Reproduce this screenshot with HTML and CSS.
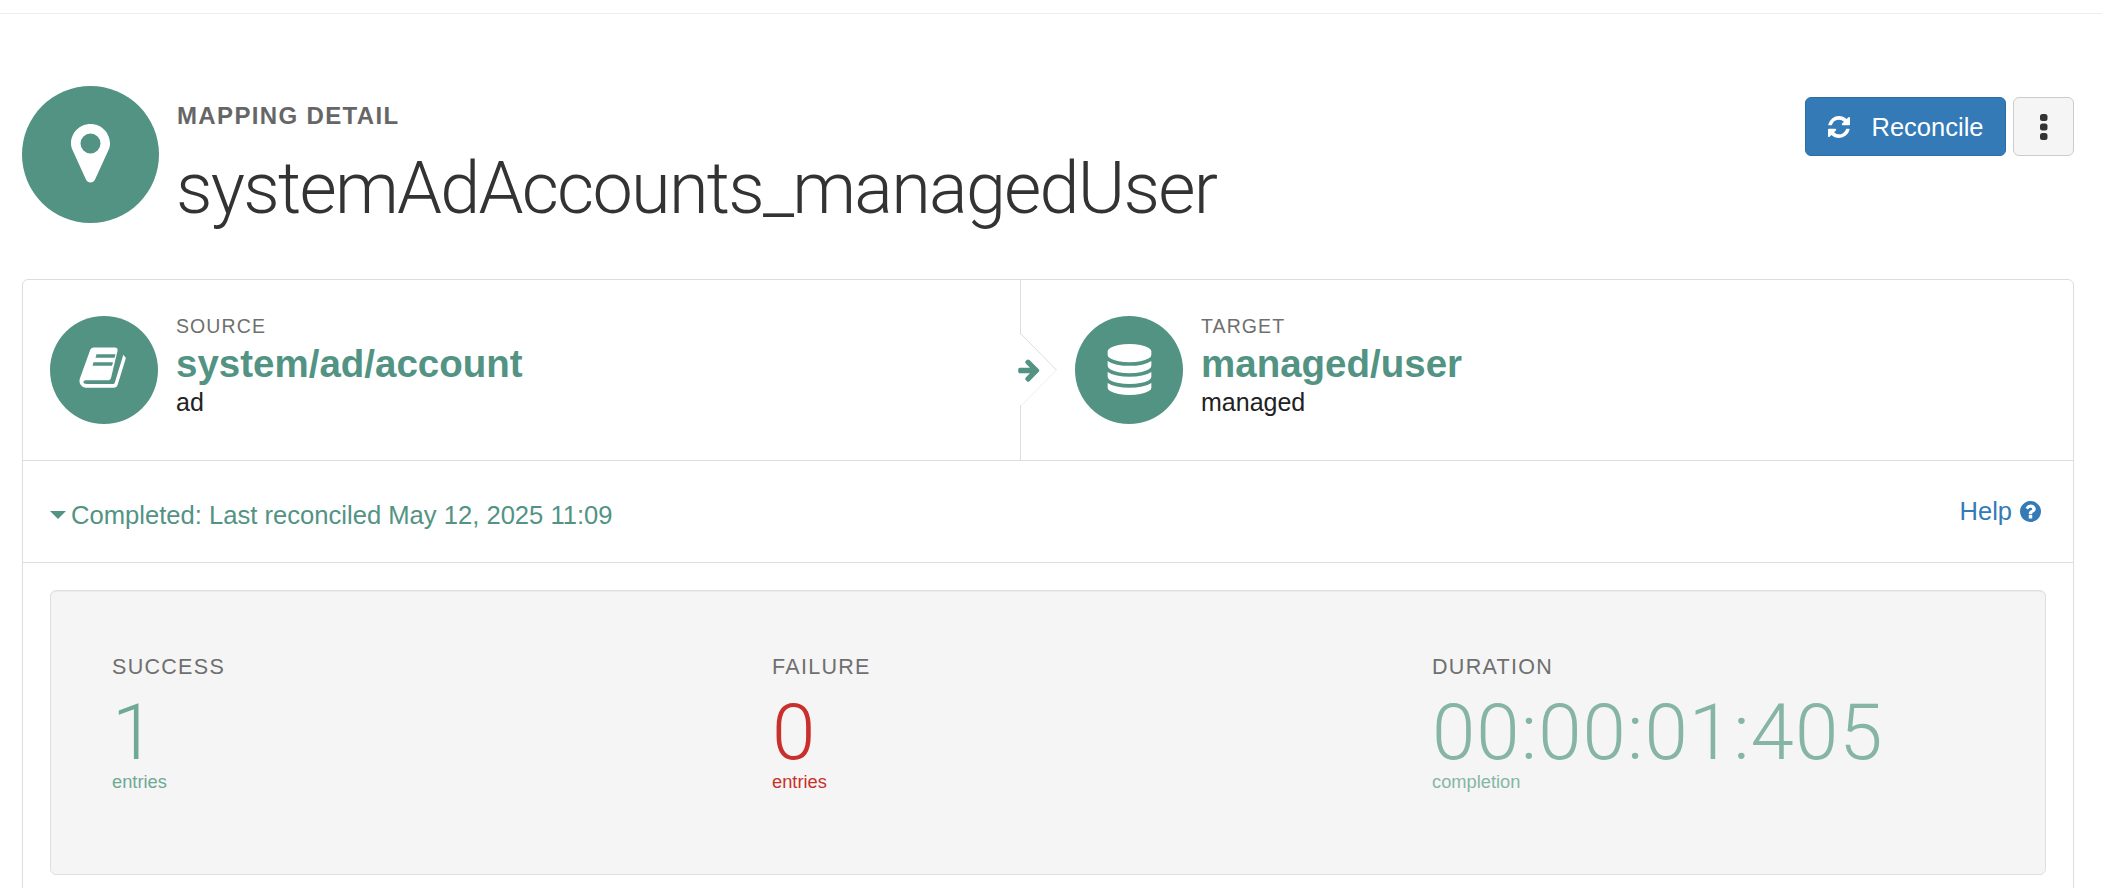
FILE: index.html
```html
<!DOCTYPE html>
<html lang="en">
<head>
<meta charset="utf-8">
<title>Mapping detail</title>
<link rel="stylesheet" href="styles.css">
</head>
<body>
<div class="topbar"></div>
<main class="page">
  <header class="head">
    <div class="avatar avatar-lg">
      <svg class="pin" viewBox="0 0 39 59"><path fill-rule="evenodd" d="M19.5 0C30.3 0 39 8.700 39 19.500c0 2.300-.5 4.500-1.500 6.500L24.500 54.500C23.500 57.200 21.800 58.600 19.500 58.600s-4-1.400-5-4.100L1.500 26C.5 24 0 21.800 0 19.500 0 8.700 8.700 0 19.500 0zm0 9.500a10 10 0 1 0 0 20 10 10 0 0 0 0-20z"/></svg>
    </div>
    <div class="head-text">
      <div class="eyebrow">MAPPING DETAIL</div>
      <h1 class="title">systemAdAccounts_managedUser</h1>
    </div>
    <div class="actions">
      <button class="btn btn-primary">
        <svg class="btn-icon" viewBox="128 128 1536 1536"><path d="M1639 1056q0 5-1 7-64 268-268 434.500t-478 166.500q-146 0-282.500-55t-243.500-157l-129 129q-19 19-45 19t-45-19-19-45v-448q0-26 19-45t45-19h448q26 0 45 19t19 45-19 45l-137 137q71 66 161 102t187 36q134 0 250-65t186-179q11-17 53-117 8-23 30-23h192q13 0 22.500 9.500t9.500 22.500zm25-800v448q0 26-19 45t-45 19h-448q-26 0-45-19t-19-45 19-45l138-138q-148-137-349-137-134 0-250 65t-186 179q-11 17-53 117-8 23-30 23h-199q-13 0-22.500-9.500t-9.500-22.500v-7q65-268 270-434.500t480-166.500q146 0 284 55.500t245 156.500l130-129q19-19 45-19t45 19 19 45z"/></svg>
        <span class="btn-label">Reconcile</span>
      </button>
      <button class="btn btn-more" aria-label="More">
        <svg class="dots" viewBox="0 0 7.500 26"><rect width="7.500" height="7" rx="2.500"/><rect y="9.500" width="7.500" height="7" rx="2.500"/><rect y="19" width="7.500" height="7" rx="2.500"/></svg>
      </button>
    </div>
  </header>

  <section class="card">
    <div class="ends">
      <div class="end end-source">
        <div class="avatar avatar-md">
          <svg class="book" viewBox="0 0 70 70"><path fill-rule="evenodd" d="M25 12.500H46c2 0 3 1.500 2.500 3.500L42 43c-.5 1.500-1.500 2.300-3 2.300H18c-2.500 0-3.600.6-3.600 1.700 0 1.200 1.300 2 3.600 2h25.500c1.200 0 2-.6 2.300-1.600L53.800 21.500l.2-1.800 2 2c.7.7.8 1.500.6 2.300L48.600 50c-.6 1.800-2 2.800-3.800 2.800H18c-4.500 0-7.500-3-7.500-6.800 0-.9.1-1.700.4-2.500L21 15.500c.5-1.800 2-3 4-3zM27.500 19.300H46.500L45.500 22.700H26.500zM24.500 27.300H44L43 30.700H23.500z"/></svg>
        </div>
        <div class="end-text">
          <div class="end-label">SOURCE</div>
          <div class="end-name">system/ad/account</div>
          <div class="end-sub">ad</div>
        </div>
      </div>
      <div class="end end-target">
        <div class="avatar avatar-md">
          <svg class="glyph" viewBox="0 0 1792 1792"><path d="M896 768q237 0 443-43t325-127v170q0 69-103 128t-280 93.500-385 34.500-385-34.500-280-93.500-103-128v-170q119 84 325 127t443 43zm0 768q237 0 443-43t325-127v170q0 69-103 128t-280 93.500-385 34.500-385-34.500-280-93.500-103-128v-170q119 84 325 127t443 43zm0-384q237 0 443-43t325-127v170q0 69-103 128t-280 93.500-385 34.500-385-34.500-280-93.500-103-128v-170q119 84 325 127t443 43zm0-1152q208 0 385 34.500t280 93.500 103 128v128q0 69-103 128t-280 93.500-385 34.500-385-34.500-280-93.500-103-128v-128q0-69 103-128t280-93.500 385-34.500z"/></svg>
        </div>
        <div class="end-text">
          <div class="end-label">TARGET</div>
          <div class="end-name">managed/user</div>
          <div class="end-sub">managed</div>
        </div>
      </div>
      <svg class="chevron" viewBox="0 0 40 74"><polygon class="chev-fill" points="0,1 36,37 0,73"/><polyline class="chev-top" points="1,1 36.500,37"/><polyline class="chev-bot" points="36.500,37 1,73"/><path class="chev-arrow" transform="translate(-3.600 23.800) scale(.0143)" d="M1600 960q0 54-37 91l-651 651q-39 37-91 37-51 0-90-37l-75-75q-38-38-38-91t38-91l293-293h-704q-52 0-84.500-37.500t-32.500-90.500v-128q0-53 32.500-90.500t84.500-37.500h704l-293-294q-38-36-38-90t38-90l75-75q38-38 90-38 53 0 91 38l651 651q37 35 37 90z"/></svg>
    </div>

    <div class="status">
      <div class="status-text"><span class="caret"></span>Completed: Last reconciled May 12, 2025 11:09</div>
      <a class="help">Help
        <svg class="help-icon" viewBox="128 128 1536 1536"><path d="M1024 1376v-192q0-14-9-23t-23-9h-192q-14 0-23 9t-9 23v192q0 14 9 23t23 9h192q14 0 23-9t9-23zm256-672q0-88-55.500-163t-138.500-116-170-41q-243 0-371 213-15 24 8 42l132 100q7 6 19 6 16 0 25-12 53-68 86-92 34-24 86-24 48 0 85.500 26t37.500 59q0 38-20 61t-68 45q-63 28-115.500 86.500t-52.500 125.500v36q0 14 9 23t23 9h192q14 0 23-9t9-23q0-19 21.500-49.500t54.500-49.500q32-18 49-28.500t46-35 44.500-48 28-60.500 12.500-81zm384 192q0 209-103 385.500t-279.500 279.500-385.500 103-385.500-103-279.500-279.500-103-385.500 103-385.500 279.500-279.500 385.500-103 385.500 103 279.500 279.500 103 385.500z"/></svg>
      </a>
    </div>

    <div class="stats-wrap">
      <div class="stats">
        <div class="stat stat-ok">
          <div class="stat-label">SUCCESS</div>
          <div class="stat-value">1</div>
          <div class="stat-unit">entries</div>
        </div>
        <div class="stat stat-bad">
          <div class="stat-label">FAILURE</div>
          <div class="stat-value">0</div>
          <div class="stat-unit">entries</div>
        </div>
        <div class="stat stat-time">
          <div class="stat-label">DURATION</div>
          <div class="stat-value">00:00:01:405</div>
          <div class="stat-unit">completion</div>
        </div>
      </div>
    </div>
  </section>
</main>
</body>
</html>
```

FILE: styles.css
```css
* { box-sizing: border-box; }
html, body { margin: 0; height: 888px; overflow: hidden; background: #fff; }
body { font-family: "Liberation Sans", Arial, sans-serif; color: #222; }

.topbar { height: 14px; border-bottom: 1px solid #eeeeee; }
.page { padding: 0 28px 0 22px; }

.head { display: flex; align-items: flex-start; height: 265px; padding-top: 72px; }
.avatar { flex: none; display: flex; align-items: center; justify-content: center; border-radius: 50%; background: #529384; }
.avatar-lg { width: 137px; height: 137px; }
.avatar-md { width: 108px; height: 108px; }
.pin { width: 39px; height: 59px; margin-bottom: 2px; fill: #fff; }
.glyph { width: 51px; height: 51px; fill: #fff; }
.book { width: 70px; height: 70px; fill: #fff; }

.head-text { margin-left: 18px; flex: 1; }
.eyebrow { margin-top: 16px; font-size: 24px; line-height: 28px; font-weight: 700; letter-spacing: 1.35px; color: #666; }
.title { margin: 17px 0 0 -1px; font-family: Roboto, "Liberation Sans", sans-serif; font-weight: 300; font-size: 72px; line-height: 84px; color: #333; letter-spacing: -1.75px; }

.actions { display: flex; gap: 7px; margin-top: 11px; }
.btn { display: flex; align-items: center; justify-content: center; height: 59px; border-radius: 6px; border: 1px solid; font: inherit; padding: 0; }
.btn-primary { width: 201px; gap: 22px; background: #337ab7; border-color: #2e6da4; color: #fff; font-size: 25.500px; }
.btn-label { padding-top: 2px; }
.btn-icon { width: 22px; height: 22px; fill: #fff; }
.btn-more { width: 61px; background: #f5f5f5; border-color: #cccccc; padding-left: 1px; }
.dots { width: 7.500px; height: 26px; fill: #333; }

.card { height: 700px; border: 1px solid #dddddd; border-radius: 6px 6px 0 0; }
.ends { position: relative; display: grid; grid-template-columns: 998px 1fr; height: 181px; border-bottom: 1px solid #dddddd; }
.end { display: flex; align-items: center; padding-bottom: 1px; }
.end-source { padding-left: 27px; border-right: 1px solid #dddddd; }
.end-target { padding-left: 54px; }
.end-text { margin-left: 18px; padding-top: 1px; }
.end-label { font-size: 19.500px; line-height: 22px; letter-spacing: 1.1px; color: #6f6f6f; margin-top: -8px; }
.end-name { margin-top: 5px; font-size: 38.500px; line-height: 44px; font-weight: 700; color: #529384; }
.end-sub { font-size: 25px; line-height: 32px; color: #222; }
.chevron { position: absolute; left: 997px; top: 53px; width: 40px; height: 74px; overflow: visible; }
.chev-fill { fill: #fff; }
.chev-top { fill: none; stroke: #dddddd; stroke-width: 1; }
.chev-bot { fill: none; stroke: #f0f0f0; stroke-width: 1; }
.chev-arrow { fill: #529384; }

.status { display: flex; align-items: center; justify-content: space-between; height: 102px; padding: 0 32px 0 27px; border-bottom: 1px solid #dddddd; }
.status-text { display: flex; align-items: center; font-size: 25.600px; color: #529384; padding-top: 7px; }
.caret { width: 0; height: 0; margin-right: 5px; border-left: 8px solid transparent; border-right: 8px solid transparent; border-top: 8px solid #529384; }
.help { display: flex; align-items: center; gap: 8px; font-size: 25.500px; color: #337ab7; margin-bottom: 1px; }
.help-icon { width: 21px; height: 21px; fill: #337ab7; }

.stats-wrap { padding: 27px 27px 0; }
.stats { display: grid; grid-template-columns: repeat(3, 660px); height: 285px; padding: 63px 7px 0 7px; background: #f5f5f5; border: 1px solid #e0e0e0; border-radius: 6px; box-shadow: inset 0 1px 1px rgba(0,0,0,.05); }
.stat { padding-left: 54px; }
.stat-label { font-size: 21.500px; line-height: 26px; letter-spacing: 1.3px; color: #6f6f6f; }
.stat-value { margin-top: 15px; font-family: Roboto, "Liberation Sans", sans-serif; font-weight: 300; font-size: 78px; line-height: 76px; letter-spacing: 1.1px; }
.stat-unit { font-size: 18.300px; line-height: 22px; }
.stat-ok .stat-value, .stat-ok .stat-unit { color: #6fa995; }
.stat-bad .stat-value, .stat-bad .stat-unit { color: #c9302c; }
.stat-time .stat-value, .stat-time .stat-unit { color: #86b5a5; }
```
